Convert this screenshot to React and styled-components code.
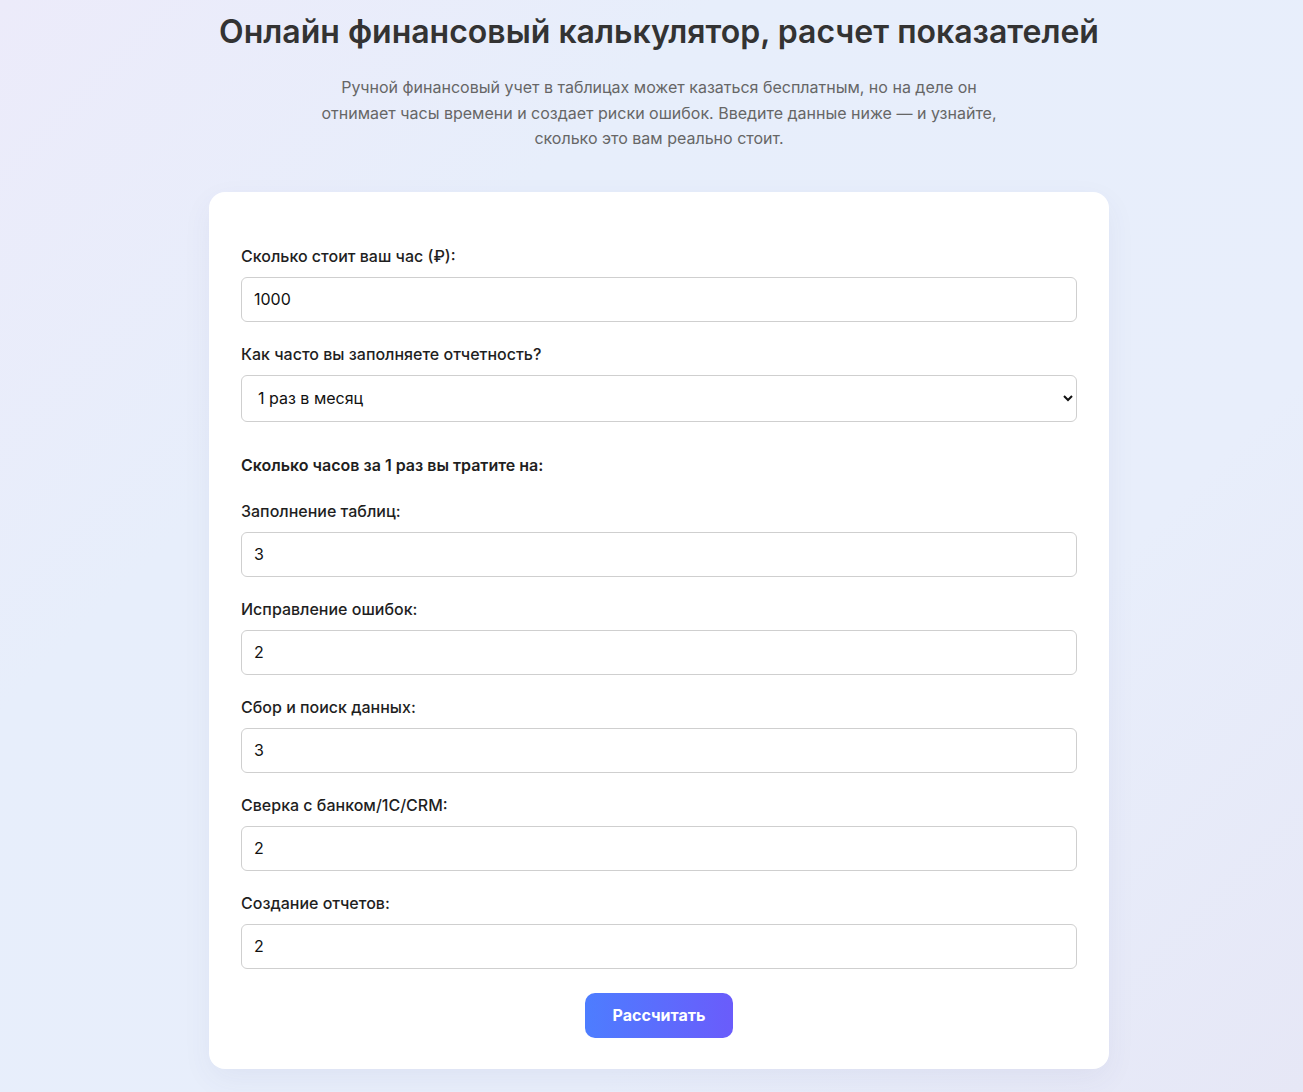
import React, { useState } from "react";
import styled, { createGlobalStyle } from "styled-components";

const GlobalStyle = createGlobalStyle`
  html, body {
    margin: 0;
    padding: 0;
  }
  body {
    font-family: Inter, "Noto Sans", "Liberation Sans", sans-serif;
    background: linear-gradient(135deg, #ecebfa 0%, #e7eefb 30%, #e8eefb 70%, #e6e7f6 100%);
    min-height: 100vh;
    color: #222;
  }
  * {
    box-sizing: border-box;
  }
`;

const Page = styled.div`
  padding: 12px 0 22px 15px;
  display: flex;
  flex-direction: column;
  align-items: center;
`;

const Title = styled.h1`
  margin: 0;
  font-size: 32px;
  font-weight: 600;
  line-height: 39px;
  color: #333;
  text-align: center;
`;

const Lead = styled.p`
  margin: 24px 0 40px;
  max-width: 700px;
  font-size: 16px;
  line-height: 25.6px;
  color: #666;
  text-align: center;
`;

const Card = styled.form`
  width: 900px;
  background: #fff;
  border-radius: 16px;
  padding: 52px 32px 31px;
  box-shadow: 0 10px 30px rgba(60, 70, 120, 0.06);
  display: flex;
  flex-direction: column;
`;

const Group = styled.div`
  display: flex;
  flex-direction: column;
  margin-bottom: 20px;
`;

const Label = styled.label`
  font-size: 16px;
  font-weight: 500;
  line-height: 24px;
  color: #1f1f1f;
  margin-bottom: 9px;
`;

const Field = styled.input`
  width: 100%;
  height: 45px;
  padding: 0 12px;
  border: 1px solid #cfcfcf;
  border-radius: 6px;
  font: inherit;
  font-size: 16px;
  color: #111;
  background: #fff;
  outline: none;
`;

const Select = styled.select`
  width: 100%;
  height: 47px;
  padding: 0 8px 0 12px;
  border: 1px solid #cfcfcf;
  border-radius: 6px;
  font: inherit;
  font-size: 16px;
  color: #111;
  background: #fff;
  outline: none;
`;

const SectionTitle = styled.p`
  margin: 11px 0 22px;
  font-size: 16px;
  font-weight: 600;
  line-height: 24px;
  color: #1f1f1f;
`;

const Submit = styled.button`
  align-self: center;
  margin-top: 4px;
  height: 45px;
  padding: 0 28px;
  border: none;
  border-radius: 10px;
  background: linear-gradient(90deg, #4d7dff 0%, #6a5cfb 100%);
  color: #fff;
  font: inherit;
  font-size: 16px;
  font-weight: 700;
  cursor: pointer;
`;

const tasks = [
  { id: "tables", label: "Заполнение таблиц:", value: "3" },
  { id: "errors", label: "Исправление ошибок:", value: "2" },
  { id: "search", label: "Сбор и поиск данных:", value: "3" },
  { id: "bank", label: "Сверка с банком/1С/CRM:", value: "2" },
  { id: "reports", label: "Создание отчетов:", value: "2" },
];

export default function App() {
  const [rate, setRate] = useState("1000");
  const [freq, setFreq] = useState("month");
  const [hours, setHours] = useState(
    Object.fromEntries(tasks.map(t => [t.id, t.value]))
  );

  return (
    <>
      <GlobalStyle />
      <Page>
        <Title>Онлайн финансовый калькулятор, расчет показателей</Title>
        <Lead>
          Ручной финансовый учет в таблицах может казаться бесплатным, но на деле он
          отнимает часы времени и создает риски ошибок. Введите данные ниже — и узнайте,
          сколько это вам реально стоит.
        </Lead>
        <Card onSubmit={e => e.preventDefault()}>
          <Group>
            <Label htmlFor="rate">Сколько стоит ваш час (₽):</Label>
            <Field
              id="rate"
              type="number"
              value={rate}
              onChange={e => setRate(e.target.value)}
            />
          </Group>
          <Group>
            <Label htmlFor="freq">Как часто вы заполняете отчетность?</Label>
            <Select id="freq" value={freq} onChange={e => setFreq(e.target.value)}>
              <option value="week">1 раз в неделю</option>
              <option value="month">1 раз в месяц</option>
              <option value="quarter">1 раз в квартал</option>
            </Select>
          </Group>
          <SectionTitle>Сколько часов за 1 раз вы тратите на:</SectionTitle>
          {tasks.map(t => (
            <Group key={t.id}>
              <Label htmlFor={t.id}>{t.label}</Label>
              <Field
                id={t.id}
                type="number"
                value={hours[t.id]}
                onChange={e => setHours({ ...hours, [t.id]: e.target.value })}
              />
            </Group>
          ))}
          <Submit type="submit">Рассчитать</Submit>
        </Card>
      </Page>
    </>
  );
}
